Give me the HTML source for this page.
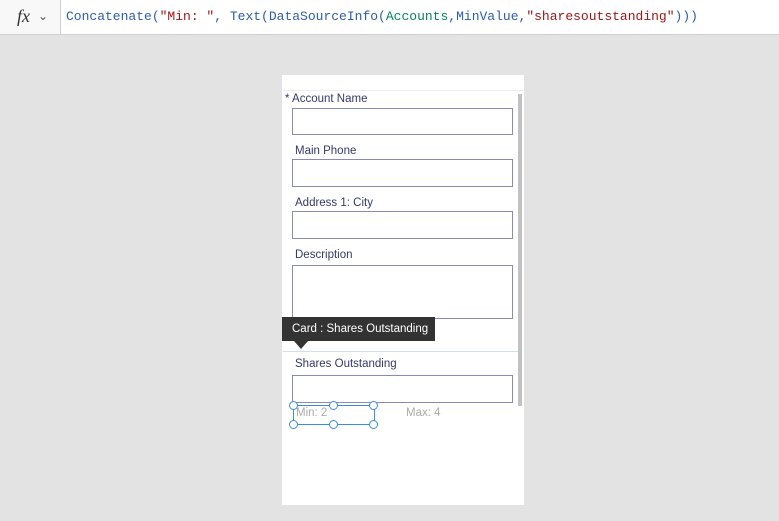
<!DOCTYPE html>
<html><head><style>
body{margin:0;width:779px;height:521px;background:#e3e3e3;font-family:"Segoe UI","Liberation Sans",sans-serif;position:relative;overflow:hidden}
.abs{position:absolute}
.top{left:0;top:0;width:779px;height:34px;background:#fff;border-bottom:1px solid #d0d0d0}
.fx{left:0;top:0;width:60px;height:34px;border-right:1px solid #d0d0d0;background:#f8f8f8}
.code{left:66px;top:9px;font-family:"Liberation Mono",monospace;font-size:13px;color:#2a5db0;white-space:pre}
.r{color:#a31515}.t{color:#098658}
.canvas{left:282px;top:75px;width:242px;height:430px;background:#fff}
.lbl{font-size:11.5px;color:#333a6a}
.inp{left:292px;width:219px;border:1px solid #8a8ab8;background:#fff}
.h{width:7px;height:7px;border:1px solid #3a8ee0;border-radius:50%;background:#fff}
</style></head><body>
<div class="abs top"></div>
<div class="abs fx"><span class="abs" style="left:17px;top:6px;font-family:'Liberation Serif',serif;font-style:italic;font-size:18px;color:#333">fx</span><span class="abs" style="left:38px;top:9px;font-size:12px;color:#555">&#8964;</span></div>
<div class="abs code">Concatenate(<span class="r">"Min: "</span>, Text(DataSourceInfo(<span class="t">Accounts</span>,MinValue,<span class="r">"sharesoutstanding"</span>)))</div>
<div class="abs canvas"></div>
<div class="abs" style="left:283px;top:90px;width:241px;height:1px;background:#eee"></div>
<div class="abs" style="left:518px;top:94px;width:4px;height:312px;background:#c2c2c2"></div>
<div class="abs lbl" style="left:285px;top:93px">* Account Name</div>
<div class="abs inp" style="top:108px;height:25px"></div>
<div class="abs lbl" style="left:295px;top:145px">Main Phone</div>
<div class="abs inp" style="top:159px;height:26px"></div>
<div class="abs lbl" style="left:295px;top:197px">Address 1: City</div>
<div class="abs inp" style="top:211px;height:26px"></div>
<div class="abs lbl" style="left:295px;top:249px">Description</div>
<div class="abs inp" style="top:265px;height:52px"></div>
<div class="abs" style="left:283px;top:351px;width:235px;height:74px;border-top:1px solid #cfe0f0"></div>
<div class="abs" style="left:282px;top:317px;width:153px;height:24px;background:#333;color:#fff;font-size:11.5px;line-height:24px;text-indent:10px">Card : Shares Outstanding</div>
<div class="abs" style="left:294px;top:341px;width:0;height:0;border-left:7px solid transparent;border-right:7px solid transparent;border-top:8px solid #333"></div>
<div class="abs lbl" style="left:295px;top:358px">Shares Outstanding</div>
<div class="abs inp" style="top:375px;height:26px"></div>
<div class="abs" style="left:296px;top:407px;font-size:11.5px;color:#aaa">Min: 2</div>
<div class="abs" style="left:406px;top:407px;font-size:11.5px;color:#aaa">Max: 4</div>
<div class="abs" style="left:293px;top:405px;width:80px;height:18px;border:1px solid #3a8ee0"></div>
<div class="abs h" style="left:289px;top:401px"></div><div class="abs h" style="left:329px;top:401px"></div><div class="abs h" style="left:369px;top:401px"></div>
<div class="abs h" style="left:289px;top:420px"></div><div class="abs h" style="left:329px;top:420px"></div><div class="abs h" style="left:369px;top:420px"></div>
</body></html>
